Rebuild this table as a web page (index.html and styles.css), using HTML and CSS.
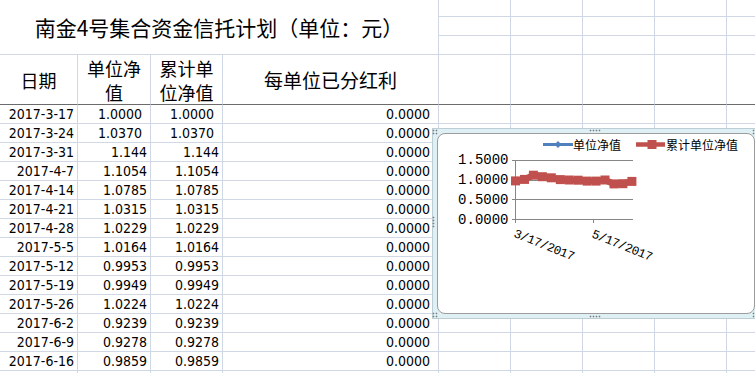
FILE: index.html
```html
<!DOCTYPE html>
<html lang="zh-CN">
<head>
<meta charset="utf-8">
<title>南金4号集合资金信托计划</title>
<link rel="stylesheet" href="styles.css">
</head>
<body>
<div class="sheet">
  <div class="cell title">南金4号集合资金信托计划（单位：元）</div>
  <span></span><span></span><span></span><span></span><span></span>
  <span></span><span></span><span></span><span></span><span></span>
  <span></span><span></span><span></span><span></span><span></span>

  <div class="cell hd fz">日期</div>
  <div class="cell hd fz">单位净<br>值</div>
  <div class="cell hd fz">累计单<br>位净值</div>
  <div class="cell hd wide fz">每单位已分红利</div>
  <span class="fz"></span><span class="fz"></span><span class="fz"></span><span class="fz"></span><span class="fz"></span>

  <div class="cell n">2017-3-17</div><div class="cell n p">1.0000</div><div class="cell n p">1.0000</div><div class="cell n p">0.0000</div>
  <span></span><span></span><span></span><span></span><span></span>
  <div class="cell n">2017-3-24</div><div class="cell n p">1.0370</div><div class="cell n p">1.0370</div><div class="cell n p">0.0000</div>
  <span></span><span></span><span></span><span></span><span></span>
  <div class="cell n">2017-3-31</div><div class="cell n">1.144</div><div class="cell n">1.144</div><div class="cell n p">0.0000</div>
  <span></span><span></span><span></span><span></span><span></span>
  <div class="cell n">2017-4-7</div><div class="cell n">1.1054</div><div class="cell n">1.1054</div><div class="cell n p">0.0000</div>
  <span></span><span></span><span></span><span></span><span></span>
  <div class="cell n">2017-4-14</div><div class="cell n">1.0785</div><div class="cell n">1.0785</div><div class="cell n p">0.0000</div>
  <span></span><span></span><span></span><span></span><span></span>
  <div class="cell n">2017-4-21</div><div class="cell n">1.0315</div><div class="cell n">1.0315</div><div class="cell n p">0.0000</div>
  <span></span><span></span><span></span><span></span><span></span>
  <div class="cell n">2017-4-28</div><div class="cell n">1.0229</div><div class="cell n">1.0229</div><div class="cell n p">0.0000</div>
  <span></span><span></span><span></span><span></span><span></span>
  <div class="cell n">2017-5-5</div><div class="cell n">1.0164</div><div class="cell n">1.0164</div><div class="cell n p">0.0000</div>
  <span></span><span></span><span></span><span></span><span></span>
  <div class="cell n">2017-5-12</div><div class="cell n">0.9953</div><div class="cell n">0.9953</div><div class="cell n p">0.0000</div>
  <span></span><span></span><span></span><span></span><span></span>
  <div class="cell n">2017-5-19</div><div class="cell n">0.9949</div><div class="cell n">0.9949</div><div class="cell n p">0.0000</div>
  <span></span><span></span><span></span><span></span><span></span>
  <div class="cell n">2017-5-26</div><div class="cell n">1.0224</div><div class="cell n">1.0224</div><div class="cell n p">0.0000</div>
  <span></span><span></span><span></span><span></span><span></span>
  <div class="cell n">2017-6-2</div><div class="cell n">0.9239</div><div class="cell n">0.9239</div><div class="cell n p">0.0000</div>
  <span></span><span></span><span></span><span></span><span></span>
  <div class="cell n">2017-6-9</div><div class="cell n">0.9278</div><div class="cell n">0.9278</div><div class="cell n p">0.0000</div>
  <span></span><span></span><span></span><span></span><span></span>
  <div class="cell n">2017-6-16</div><div class="cell n">0.9859</div><div class="cell n">0.9859</div><div class="cell n p">0.0000</div>
  <span></span><span></span><span></span><span></span><span></span>

  <span></span><span></span><span></span><span></span><span></span><span></span><span></span><span></span><span></span>

  <div class="chart">
    <div class="chart-inner">
      <svg class="plot" width="318" height="179" viewBox="0 0 318 179">
        <line x1="105" y1="10.5" x2="135" y2="10.5" stroke="#4f81bd" stroke-width="3"/>
        <path d="M120 7 L123.5 10.5 L120 14 L116.5 10.5 Z" fill="#4f81bd"/>
        <text x="135" y="16" class="lg">单位净值</text>
        <line x1="198" y1="10.5" x2="227" y2="10.5" stroke="#c0504d" stroke-width="4.5"/>
        <rect x="209.5" y="6" width="9" height="9" fill="#c0504d"/>
        <text x="228" y="16" class="lg">累计单位净值</text>

        <g stroke="#868686" stroke-width="1">
          <line x1="74" y1="26.5" x2="195" y2="26.5"/>
          <line x1="74" y1="46.5" x2="195" y2="46.5"/>
          <line x1="74" y1="65.5" x2="195" y2="65.5"/>
          <line x1="74" y1="85.5" x2="195" y2="85.5"/>
          <line x1="77.5" y1="26.5" x2="77.5" y2="89"/>
          <line x1="155.5" y1="85.5" x2="155.5" y2="89"/>
        </g>

        <text class="ax" x="70.5" y="30.2" text-anchor="end">1.5000</text>
        <text class="ax" x="70.5" y="50.2" text-anchor="end">1.0000</text>
        <text class="ax" x="70.5" y="69.5" text-anchor="end">0.5000</text>
        <text class="ax" x="70.5" y="89.6" text-anchor="end">0.0000</text>

        <text class="ax xl" transform="translate(75 102.5) rotate(22)">3/17/2017</text>
        <text class="ax xl" transform="translate(153 103) rotate(22)">5/17/2017</text>

        <polyline fill="none" stroke="#4f81bd" stroke-width="3" points="77.5,46.9 86.5,45.4 95.4,41.2 104.4,42.7 113.3,43.8 122.3,45.6 131.2,46.0 140.2,46.2 149.1,47.1 158.1,47.1 167,46.0 176,49.9 184.9,49.7 193.9,47.4"/>
        <polyline fill="none" stroke="#c0504d" stroke-width="6.5" stroke-linejoin="round" points="77.5,46.9 86.5,45.4 95.4,41.2 104.4,42.7 113.3,43.8 122.3,45.6 131.2,46.0 140.2,46.2 149.1,47.1 158.1,47.1 167,46.0 176,49.9 184.9,49.7 193.9,47.4"/>
        <g fill="#c0504d">
          <rect x="73" y="42.4" width="9" height="9"/>
          <rect x="82" y="40.9" width="9" height="9"/>
          <rect x="90.9" y="36.7" width="9" height="9"/>
          <rect x="99.9" y="38.2" width="9" height="9"/>
          <rect x="108.8" y="39.3" width="9" height="9"/>
          <rect x="117.8" y="41.1" width="9" height="9"/>
          <rect x="126.7" y="41.5" width="9" height="9"/>
          <rect x="135.7" y="41.7" width="9" height="9"/>
          <rect x="144.6" y="42.6" width="9" height="9"/>
          <rect x="153.6" y="42.6" width="9" height="9"/>
          <rect x="162.5" y="41.5" width="9" height="9"/>
          <rect x="171.5" y="45.4" width="9" height="9"/>
          <rect x="180.4" y="45.2" width="9" height="9"/>
          <rect x="189.4" y="42.9" width="9" height="9"/>
        </g>
      </svg>
    </div>
    <span class="hdl corner tl"></span>
    <span class="hdl corner bl"></span>
    <span class="hdl corner tr"></span>
    <span class="hdl corner br"></span>
    <span class="hdl hz tm"></span>
    <span class="hdl hz bm"></span>
    <span class="hdl vt lm"></span>
  </div>
</div>
</body>
</html>
```

FILE: styles.css
```css
html, body {
  margin: 0;
  padding: 0;
  overflow: hidden;
  background: #ffffff;
}

body {
  width: 755px;
  height: 373px;
}

.sheet {
  position: relative;
  display: grid;
  grid-template-columns: 78px 73px 72px 216px 72px 72px 72px 72px 72px;
  grid-template-rows: 17px 19px 19px 50px repeat(15, 19px);
  width: 799px;
  font-family: "DejaVu Sans Condensed", "DejaVu Sans", sans-serif;
  font-stretch: condensed;
  font-size: 14px;
  color: #000000;
}

.sheet > span,
.sheet > .cell {
  box-sizing: border-box;
  border-right: 1px solid #d0d7e5;
  border-bottom: 1px solid #d0d7e5;
  min-width: 0;
  overflow: hidden;
}

.sheet > .fz {
  border-bottom-color: #6b6b6b;
}

.title {
  grid-column: 1 / 5;
  grid-row: 1 / 4;
  display: flex;
  align-items: center;
  justify-content: center;
  padding-bottom: 1px;
  font-family: "Noto Sans CJK SC", sans-serif;
  font-stretch: normal;
  font-size: 21px;
  white-space: nowrap;
}

.hd {
  display: flex;
  align-items: center;
  justify-content: center;
  text-align: center;
  font-family: "Noto Sans CJK SC", sans-serif;
  font-stretch: normal;
  font-size: 18px;
  line-height: 24px;
}

.hd.wide {
  font-size: 19px;
}

.n {
  text-align: right;
  padding-right: 3px;
  line-height: 19px;
  white-space: nowrap;
}

.n.p {
  padding-right: 8px;
}

/* chart object */
.chart {
  position: absolute;
  left: 432px;
  top: 128px;
  width: 328px;
  height: 191px;
  box-sizing: border-box;
  border: 1px solid #bccdd5;
  background: #dff0f5;
  padding: 4px;
  z-index: 2;
}

.chart-inner {
  position: relative;
  height: 100%;
  box-sizing: border-box;
  border: 1px solid #9c9c9c;
  border-radius: 8px;
  background: #ffffff;
  overflow: hidden;
}

.plot {
  position: absolute;
  left: 0;
  top: 0;
  display: block;
}

.lg {
  font-family: "Noto Sans CJK SC", sans-serif;
  font-size: 12px;
  fill: #000000;
}

.ax {
  font-family: "Liberation Mono", monospace;
  font-size: 14px;
  fill: #000000;
}

.ax.xl {
  font-size: 12.5px;
  letter-spacing: -0.4px;
}

.hdl {
  position: absolute;
  background-image: radial-gradient(circle, #7a7a7a 0, #7a7a7a 0.75px, rgba(122,122,122,0) 1.1px);
  background-size: 3px 3px;
  z-index: 3;
}

.corner {
  width: 6px;
  height: 6px;
}

.tl { left: -1px; top: 0; }
.bl { left: -1px; bottom: 0; }
.tr { left: 319px; top: 0; }
.br { left: 319px; bottom: 0; }

.hz {
  width: 12px;
  height: 3px;
  left: 156px;
}

.tm { top: 0; }
.bm { bottom: 0; }

.vt {
  width: 3px;
  height: 12px;
}

.lm { left: -1px; top: 87px; }
```
